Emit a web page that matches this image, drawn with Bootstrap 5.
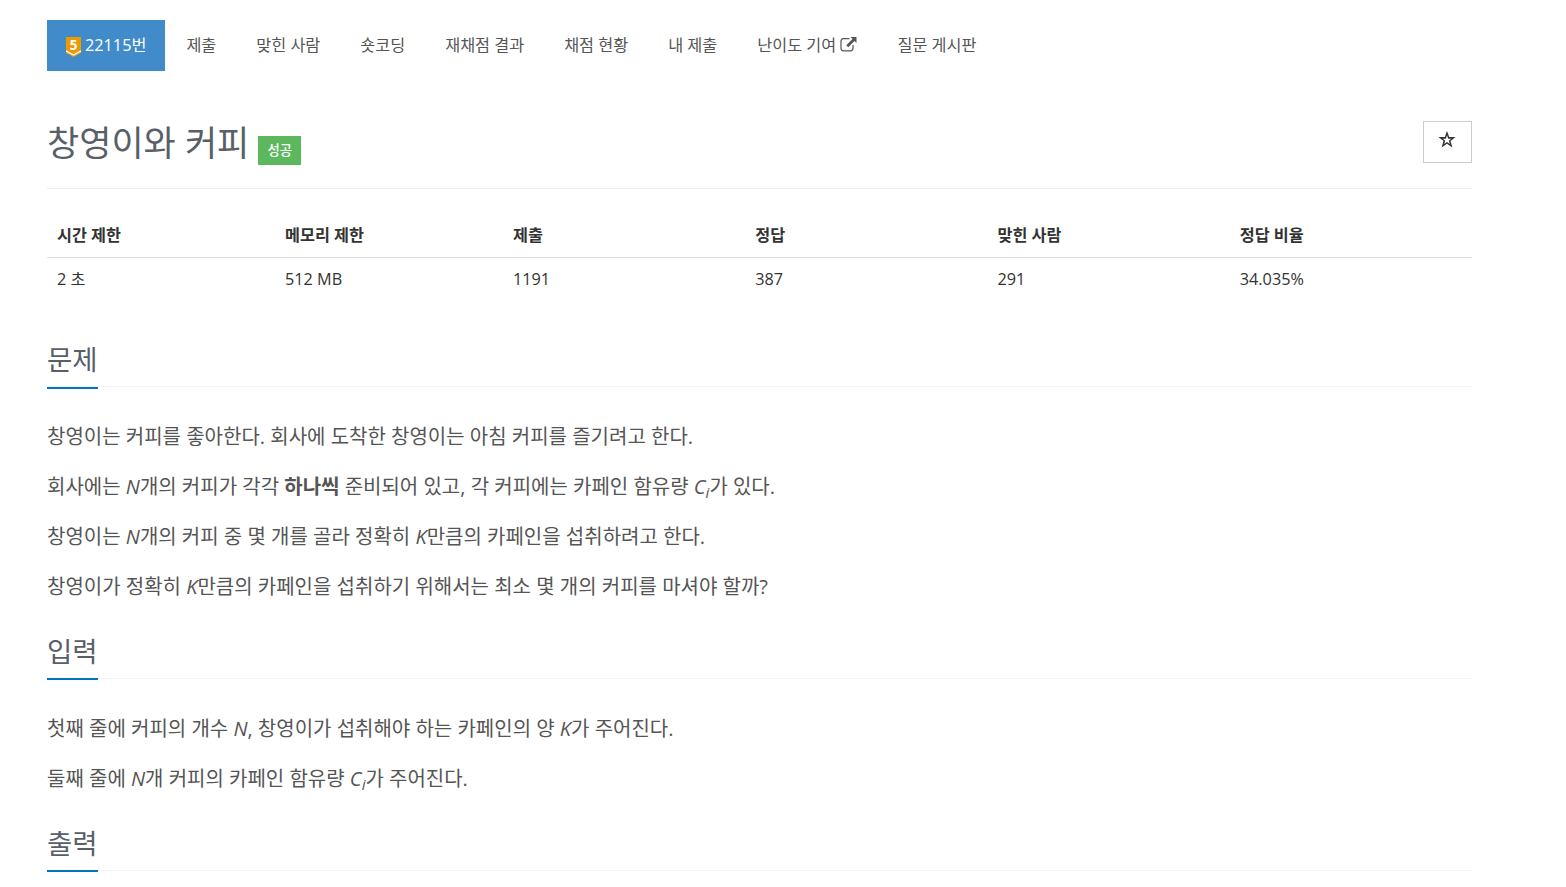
<!DOCTYPE html>
<html lang="ko">

<head>
    <meta charset="UTF-8">
    <meta name="viewport" content="width=device-width, initial-scale=1.0">
    <title>22115번: 창영이와 커피</title>
    <link href="https://cdn.jsdelivr.net/npm/bootstrap@5.3.0/dist/css/bootstrap.min.css" rel="stylesheet">
    <style>
        body {
            font-family: "Open Sans", "Noto Sans CJK KR", sans-serif;
            font-size: 16.25px;
            line-height: 1.6;
            color: #333;
            overflow: hidden;
        }

        .page-wrap {
            width: 1425px;
            margin-left: 47px;
            padding-top: 20px;
        }

        .problem-menu {
            --bs-nav-pills-border-radius: 0;
            --bs-nav-pills-link-active-bg: #428bca;
            --bs-nav-link-color: #555;
            --bs-nav-link-hover-color: #333;
            --bs-nav-link-padding-x: 18.75px;
            --bs-nav-link-padding-y: 0;
            gap: 2.5px;
        }

        .problem-menu .nav-link {
            height: 51px;
            line-height: 50px;
            white-space: nowrap;
        }

        .tier-icon {
            width: 15px;
            height: 20px;
            vertical-align: -6px;
            overflow: visible;
        }

        .link-icon {
            width: 17px;
            height: 15px;
            vertical-align: -1px;
        }

        .title-bar {
            height: 118px;
            padding-top: 50px;
            border-bottom: 1px solid #eee;
        }

        .title-bar h1 {
            font-size: 35px;
            line-height: 44px;
            color: #585f69;
            font-weight: 400;
        }

        .result-label {
            width: 43px;
            height: 29px;
            margin: 15px 0 0 9px;
            text-align: center;
            font-size: 13.4px;
            line-height: 29px;
            font-weight: 500;
            color: #fff;
            background-color: #5cb85c;
        }

        .btn-star {
            width: 49px;
            height: 42px;
            border: 1px solid #ccc;
            border-radius: 0;
            padding: 0 2px 5px 0;
        }

        .info-table {
            --bs-table-color: #333;
            table-layout: fixed;
            margin: 24px 0 0;
        }

        .info-table th,
        .info-table td {
            height: 44px;
            padding: 0 10px;
            border: 0;
            vertical-align: middle;
        }

        .info-table th {
            border-bottom: 1px solid #ddd;
        }

        .first-section {
            margin-top: 35px;
        }

        .headline {
            height: 51px;
            margin-bottom: 34px;
            border-bottom: 1px dotted #e4e9f0;
        }

        .headline h2 {
            height: 52px;
            margin: 0;
            font-size: 27.5px;
            line-height: 47px;
            font-weight: 400;
            color: #585f69;
            border-bottom: 2px solid #0076c0;
        }

        .first-section .headline h2 {
            height: 53px;
        }

        .problem-text {
            font-size: 20px;
            line-height: 32px;
            color: #555;
            margin-bottom: 25px;
        }

        .problem-text p {
            height: 32px;
            margin-bottom: 18px;
            white-space: nowrap;
        }
    </style>
</head>

<body>
    <div class="page-wrap">
        <ul class="nav nav-pills problem-menu">
            <li class="nav-item">
                <a class="nav-link active" href="#"><svg class="tier-icon" viewBox="0 0 15 20">
                        <path d="M0 0H15V16L7.5 20L0 16Z" fill="#ec9a00" />
                        <path d="M0 13.3L7.5 17.3L15 13.3V14.8L7.5 18.8L0 14.8Z" fill="#fff" />
                        <text x="7.5" y="12.7" text-anchor="middle" font-size="13.5" font-weight="700" fill="#fff">5</text>
                    </svg> 22115번</a>
            </li>
            <li class="nav-item"><a class="nav-link" href="#">제출</a></li>
            <li class="nav-item"><a class="nav-link" href="#">맞힌 사람</a></li>
            <li class="nav-item"><a class="nav-link" href="#">숏코딩</a></li>
            <li class="nav-item"><a class="nav-link" href="#">재채점 결과</a></li>
            <li class="nav-item"><a class="nav-link" href="#">채점 현황</a></li>
            <li class="nav-item"><a class="nav-link" href="#">내 제출</a></li>
            <li class="nav-item">
                <a class="nav-link" href="#">난이도 기여 <svg class="link-icon" viewBox="0 0 17 15">
                        <path d="M9.5 1.7H3.5Q1 1.7 1 4.2V11.3Q1 13.8 3.5 13.8H10.5Q13 13.8 13 11.3V8" fill="none" stroke="#555" stroke-width="1.2" />
                        <path d="M10.5 0H16.5V6L14.5 4L8.2 10.2L6.3 8.3L12.5 2Z" fill="#555" />
                    </svg></a>
            </li>
            <li class="nav-item"><a class="nav-link" href="#">질문 게시판</a></li>
        </ul>

        <div class="title-bar d-flex align-items-start">
            <h1 class="m-0">창영이와 커피</h1>
            <span class="result-label">성공</span>
            <button type="button" class="btn btn-star ms-auto d-flex align-items-center justify-content-center" aria-label="즐겨찾기">
                <svg width="18" height="17" viewBox="0 0 18 17">
                    <path fill-rule="evenodd" d="M9 0L11.2 6H17.6L12.5 10L14.4 16.5L9 12.7L3.6 16.5L5.5 10L0.4 6H6.8ZM9 4.2L7.8 7.8H4.8L7.2 9.8L6.2 13.1L9 11.1L11.8 13.1L10.8 9.8L13.2 7.8H10.2Z" fill="#333" />
                </svg>
            </button>
        </div>

        <table class="table info-table">
            <colgroup>
                <col style="width:16%">
                <col style="width:16%">
                <col style="width:17%">
                <col style="width:17%">
                <col style="width:17%">
                <col style="width:17%">
            </colgroup>
            <thead>
                <tr>
                    <th>시간 제한</th>
                    <th>메모리 제한</th>
                    <th>제출</th>
                    <th>정답</th>
                    <th>맞힌 사람</th>
                    <th>정답 비율</th>
                </tr>
            </thead>
            <tbody>
                <tr>
                    <td>2 초</td>
                    <td>512 MB</td>
                    <td>1191</td>
                    <td>387</td>
                    <td>291</td>
                    <td>34.035%</td>
                </tr>
            </tbody>
        </table>

        <section class="first-section">
            <div class="headline d-flex">
                <h2>문제</h2>
            </div>
            <div class="problem-text">
                <p>창영이는 커피를 좋아한다. 회사에 도착한 창영이는 아침 커피를 즐기려고 한다.</p>
                <p>회사에는 <em>N</em>개의 커피가 각각 <strong>하나씩</strong> 준비되어 있고, 각 커피에는 카페인 함유량 <em>C<sub>i</sub></em>가 있다.</p>
                <p>창영이는 <em>N</em>개의 커피 중 몇 개를 골라 정확히 <em>K</em>만큼의 카페인을 섭취하려고 한다.</p>
                <p>창영이가 정확히 <em>K</em>만큼의 카페인을 섭취하기 위해서는 최소 몇 개의 커피를 마셔야 할까?</p>
            </div>
        </section>

        <section>
            <div class="headline d-flex">
                <h2>입력</h2>
            </div>
            <div class="problem-text">
                <p>첫째 줄에 커피의 개수 <em>N</em>, 창영이가 섭취해야 하는 카페인의 양 <em>K</em>가 주어진다.</p>
                <p>둘째 줄에 <em>N</em>개 커피의 카페인 함유량 <em>C<sub>i</sub></em>가 주어진다.</p>
            </div>
        </section>

        <section>
            <div class="headline d-flex">
                <h2>출력</h2>
            </div>
        </section>
    </div>

    <script src="https://cdn.jsdelivr.net/npm/bootstrap@5.3.0/dist/js/bootstrap.bundle.min.js"></script>
</body>

</html>
